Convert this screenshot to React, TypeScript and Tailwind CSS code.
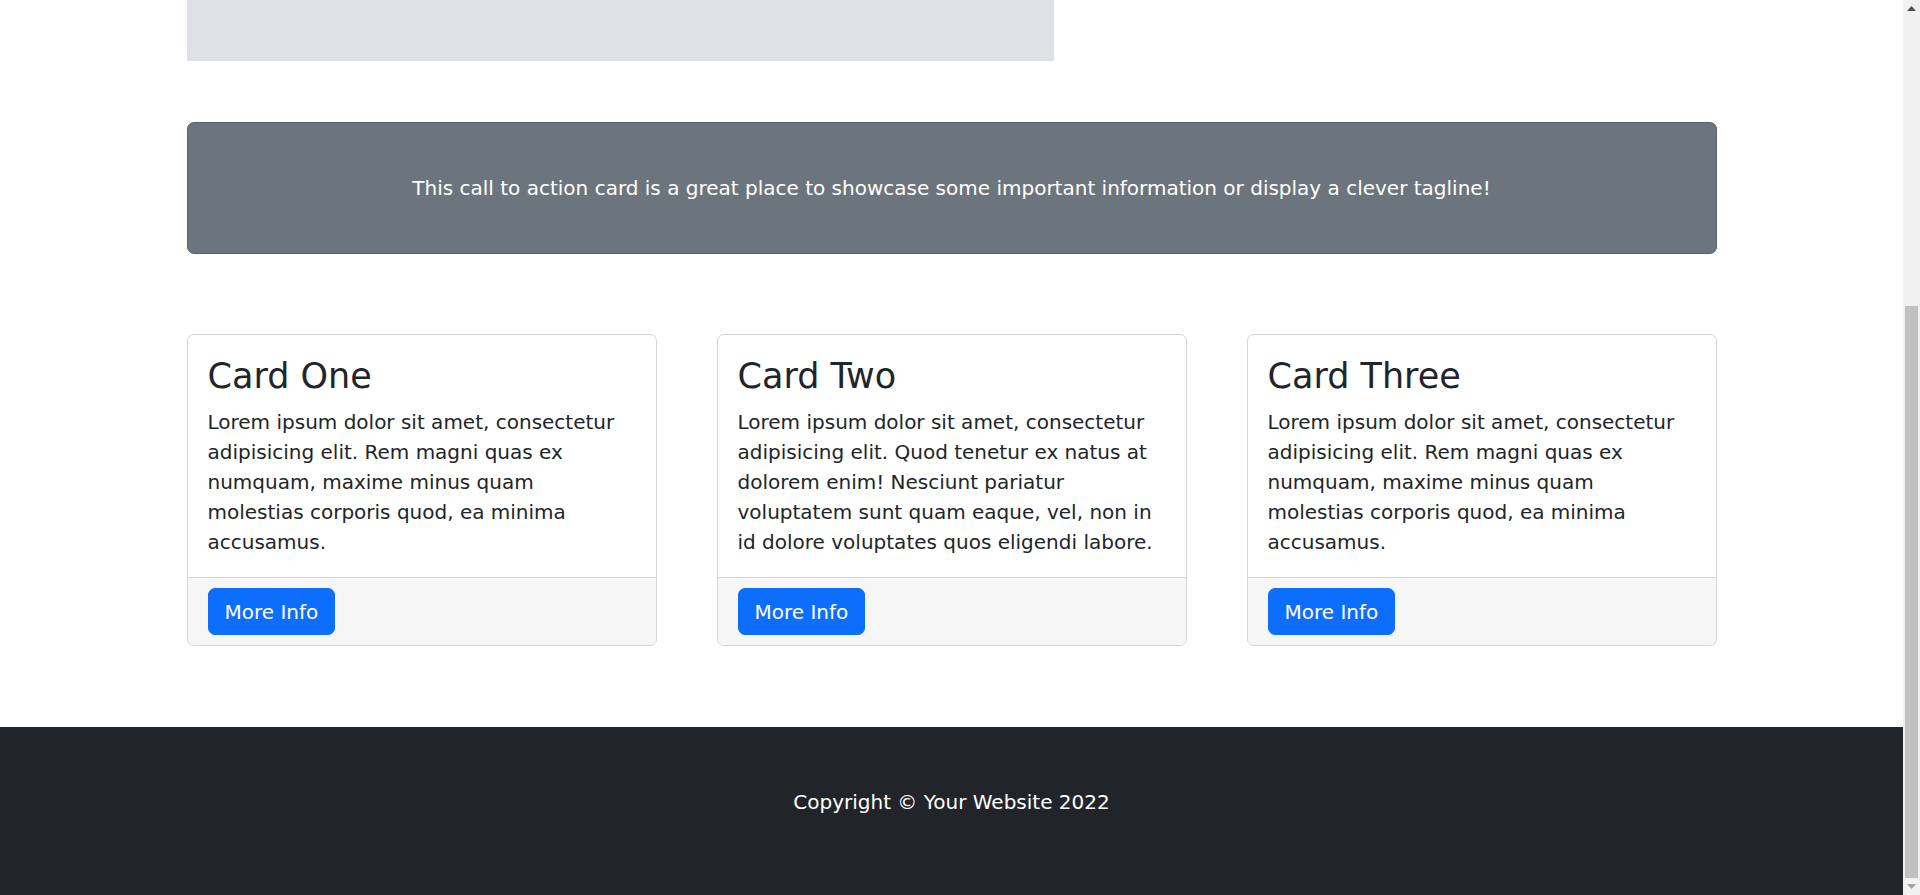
import React from 'react';

const cards = [
  {
    title: 'Card One',
    text: 'Lorem ipsum dolor sit amet, consectetur adipisicing elit. Rem magni quas ex numquam, maxime minus quam molestias corporis quod, ea minima accusamus.',
  },
  {
    title: 'Card Two',
    text: 'Lorem ipsum dolor sit amet, consectetur adipisicing elit. Quod tenetur ex natus at dolorem enim! Nesciunt pariatur voluptatem sunt quam eaque, vel, non in id dolore voluptates quos eligendi labore.',
  },
  {
    title: 'Card Three',
    text: 'Lorem ipsum dolor sit amet, consectetur adipisicing elit. Rem magni quas ex numquam, maxime minus quam molestias corporis quod, ea minima accusamus.',
  },
];

function Scrollbar() {
  return (
    <div className="flex w-[17px] flex-col bg-[#f1f1f1]">
      <div className="flex h-[17px] items-center justify-center">
        <svg width="9" height="5" viewBox="0 0 9 5">
          <polygon points="0,5 4.5,0 9,5" fill="#505050" />
        </svg>
      </div>
      <div className="flex flex-1 flex-col px-[2px] pt-[289px]">
        <div className="flex-1 bg-[#c1c1c1]" />
      </div>
      <div className="flex h-[17px] items-center justify-center">
        <svg width="9" height="5" viewBox="0 0 9 5">
          <polygon points="0,0 9,0 4.5,5" fill="#a3a3a3" />
        </svg>
      </div>
    </div>
  );
}

export default function App() {
  return (
    <div className="flex h-[895px] overflow-hidden bg-white font-['DejaVu_Sans',sans-serif] text-[#212529]">
      <div className="flex min-w-0 flex-1 flex-col">
        <main className="mx-auto w-[1530px]">
          <div className="flex gap-[60px]">
            <div className="h-[61px] w-[867px] bg-[#dee2e6]" />
          </div>

          <div className="mt-[61px] rounded-[7px] border border-[#5a6168] bg-[#6c757d] py-[50px] text-center text-[20px] leading-[30px] text-white">
            <p>This call to action card is a great place to showcase some important information or display a clever tagline!</p>
          </div>

          <div className="mt-[80px] grid grid-cols-3 gap-[60px]">
            {cards.map((card) => (
              <div key={card.title} className="flex flex-col rounded-[7px] border border-[#d5d5d5] bg-white">
                <div className="flex-1 p-[20px]">
                  <h2 className="mb-[10px] text-[35px] leading-[42px] font-medium">{card.title}</h2>
                  <p className="text-[20px] leading-[30px]">{card.text}</p>
                </div>
                <div className="rounded-b-[7px] border-t border-[#d5d5d5] bg-[#f6f6f6] px-[20px] py-[10px]">
                  <button className="rounded-[7px] border border-[#0d6efd] bg-[#0d6efd] px-[16px] py-[7.5px] text-[20px] leading-[30px] text-white">
                    More Info
                  </button>
                </div>
              </div>
            ))}
          </div>
        </main>

        <footer className="mt-[81px] h-[168px] bg-[#212529] pt-[60px]">
          <p className="text-center text-[20px] leading-[30px] text-white">Copyright © Your Website 2022</p>
        </footer>
      </div>
      <Scrollbar />
    </div>
  );
}
